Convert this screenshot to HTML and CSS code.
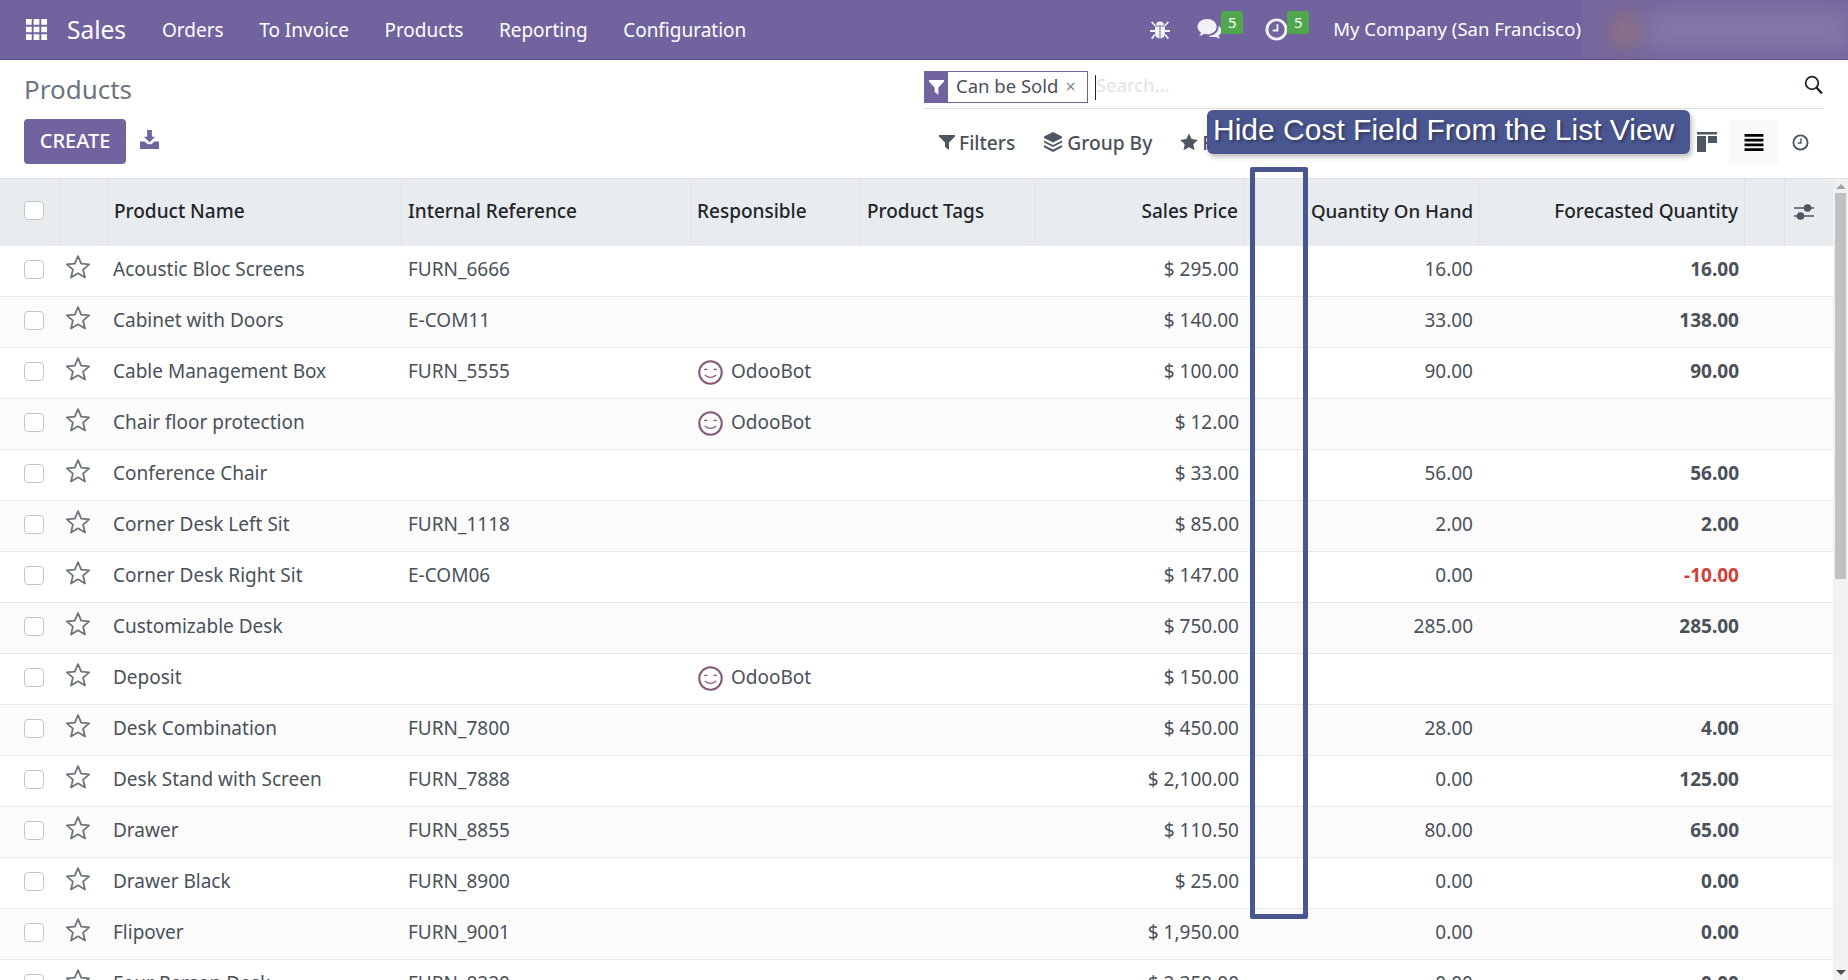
FILE: index.html
```html
<!DOCTYPE html>
<html lang="en">
<head>
<meta charset="utf-8">
<title>Products</title>
<link rel="stylesheet" href="styles.css">
</head>
<body>
<svg class="defs" aria-hidden="true">
  <symbol id="star" viewBox="0 0 24 24"><path d="M12 1.200l3.200 7.500 8 .7-6.100 5.200 1.900 7.900L12 18.300l-7 4.200 1.900-7.900L.8 9.400l8-.7z" fill="none" stroke="currentColor" stroke-width="1.800" stroke-linejoin="round"/></symbol>
  <symbol id="bot" viewBox="0 0 24 24"><circle cx="12" cy="12" r="10.800" fill="none" stroke="#875a7b" stroke-width="2"/><path d="M6 9.500q1.500-1.400 3 0M15 9.500q1.500-1.400 3 0M6.500 14.500q5.500 4.500 11 0" fill="none" stroke="#875a7b" stroke-width="1.200"/></symbol>
</svg>
<div class="app">
  <header class="navbar">
    <svg class="ico-grid" viewBox="0 0 22 22"><path fill="#fff" d="M0 0h6v6H0zM8 0h6v6H8zM16 0h6v6h-6zM0 8h6v6H0zM8 8h6v6H8zM16 8h6v6h-6zM0 16h6v6H0zM8 16h6v6H8zM16 16h6v6h-6z"/></svg>
    <span class="brand">Sales</span>
    <nav class="menu">
      <a>Orders</a><a>To Invoice</a><a>Products</a><a>Reporting</a><a>Configuration</a>
    </nav>
    <div class="systray">
      <svg class="ico-bug" viewBox="0 0 20 20"><path fill="#f3f1f7" d="M6 5.500a4 4 0 0 1 8 0zM5 6.500h4.500v12Q5 18 5 12.500zM10.500 6.500H15v6q0 5.500-4.500 6zM1 2.500L2.200 1.300 6 5.500l-1 1zM19 2.500l-1.200-1.200L14 5.500l1 1zM0 10h5v2H0zM15 10h5v2h-5zM1 18l3.500-4 1 1.200-3.200 4zM19 18l-3.500-4-1 1.200 3.200 4z"/></svg>
      <span class="tray-item tray-chat">
        <svg class="ico-chat" viewBox="0 0 26 24"><path fill="#f3f1f7" d="M10.500 1C5 1 .5 4.500.5 9c0 2.500 1.400 4.700 3.600 6.200-.3 1.200-1 2.300-2 3.300 2 0 3.800-.8 5.200-2 1 .3 2 .4 3.200.4 5.500 0 10-3.500 10-7.900S16 1 10.500 1z"/><path fill="#f3f1f7" d="M22.500 8c1.900 1.400 3 3.200 3 5.300 0 2.200-1.200 4-3.100 5.300.3 1 .9 1.900 1.700 2.900-1.800-.3-3.300-1-4.500-2-1 .2-2 .3-3 .3-2 0-3.800-.5-5.200-1.300 6 0 11.500-3.500 11.100-10.500z"/></svg>
        <b class="badge">5</b>
      </span>
      <span class="tray-item">
        <svg class="ico-clock-w" viewBox="0 0 24 24"><circle cx="12" cy="12" r="10" fill="none" stroke="#f3f1f7" stroke-width="3"/><path d="M13 6.500v6.500H8" fill="none" stroke="#f3f1f7" stroke-width="2"/></svg>
        <b class="badge">5</b>
      </span>
      <span class="company">My Company (San Francisco)</span>
    </div>
    <div class="user-blur" aria-hidden="true"><i class="blur-avatar"></i><i class="blur-name"></i></div>
  </header>

  <section class="control">
    <div class="control-left">
      <h1 class="title">Products</h1>
      <div class="actions">
        <button class="create">CREATE</button>
        <svg class="ico-download" viewBox="0 0 20 20"><path fill="#71639e" d="M7.500 0h5v7H16l-6 6-6-6h3.500zM0 12h5l3 3h4l3-3h5v8H0z"/></svg>
      </div>
    </div>
    <div class="control-right">
      <div class="search">
        <span class="facet-icon"><svg viewBox="0 0 16 16"><path fill="#fff" d="M0 0h16v1.500L10 8v8l-4-3.500V8L0 1.500z"/></svg></span>
        <span class="facet">Can be Sold<i class="facet-x">×</i></span>
        <span class="caret"></span>
        <span class="placeholder">Search...</span>
        <svg class="ico-search" viewBox="0 0 20 20"><circle cx="8" cy="8" r="6.300" fill="none" stroke="#212529" stroke-width="1.800"/><path d="M12.500 12.500L18 18.500" stroke="#212529" stroke-width="2.400"/></svg>
      </div>
      <div class="tools">
        <div class="filters">
          <span class="tool"><svg class="ico-filter" viewBox="0 0 16 16"><path fill="#4c5761" d="M0 1h16v1.500L10 8.500V16l-4-3V8.500L0 2.500z"/></svg>Filters</span>
          <span class="tool"><svg class="ico-layers" viewBox="0 0 20 20"><path fill="#4c5761" d="M10 0l9 4.500v1.500L10 10.500 1 6V4.500zM1 8.500l9 4.500 9-4.500v2L10 15l-9-4.500zM1 13l9 4.500 9-4.500v2.200L10 20l-9-4.800z"/></svg>Group By</span>
          <span class="tool"><svg class="ico-star-solid" viewBox="0 0 20 20"><path fill="#4c5761" d="M10 .5l3 6.300 6.800.9-5 4.700 1.300 6.900-6.100-3.400-6.100 3.400 1.300-6.900-5-4.700 6.800-.9z"/></svg>Favorites</span>
        </div>
        <div class="views">
          <svg class="ico-kanban" viewBox="0 0 20 20"><path fill="#4c5761" d="M0 0h20v2.500H0zM0 4h9v16H0zM11 4h9v7h-9z"/></svg>
          <span class="view-active"><svg class="ico-list" viewBox="0 0 20 18"><path d="M0 0h20v3H0zM0 5h20v3H0zM0 10h20v3H0zM0 15h20v3H0z"/></svg></span>
          <svg class="ico-clock" viewBox="0 0 18 18"><circle cx="9" cy="9" r="7.500" fill="none" stroke="#4c5761" stroke-width="2"/><path d="M9.500 4.500v5H6" fill="none" stroke="#4c5761" stroke-width="1.500"/></svg>
        </div>
      </div>
    </div>
  </section>

  <section class="content">
    <table class="list">
      <colgroup>
        <col class="c-check"><col class="c-fav"><col class="c-name"><col class="c-ref"><col class="c-resp"><col class="c-tags"><col class="c-price"><col class="c-cost"><col class="c-qty"><col class="c-fore"><col class="c-gap"><col class="c-opt">
      </colgroup>
      <thead>
        <tr>
          <th class="cb-cell"><i class="cb"></i></th><th></th><th>Product Name</th><th>Internal Reference</th><th>Responsible</th><th>Product Tags</th><th class="num">Sales Price</th><th></th><th class="num qty-head">Quantity On Hand</th><th class="num">Forecasted Quantity</th><th></th>
          <th class="opt"><svg class="ico-sliders" viewBox="0 0 20 18"><path stroke="#4c5761" stroke-width="1.600" d="M0 5h20M0 13h20"/><circle cx="13.500" cy="5" r="3.800" fill="#4c5761"/><circle cx="6.500" cy="13" r="3.800" fill="#4c5761"/></svg></th>
        </tr>
      </thead>
      <tbody>
        <tr><td class="cb-cell"><i class="cb"></i></td><td class="fav"><svg class="star"><use href="#star"/></svg></td><td class="name">Acoustic Bloc Screens</td><td>FURN_6666</td><td></td><td></td><td class="num">$ 295.00</td><td></td><td class="num">16.00</td><td class="num strong">16.00</td><td></td><td></td></tr>
        <tr><td class="cb-cell"><i class="cb"></i></td><td class="fav"><svg class="star"><use href="#star"/></svg></td><td class="name">Cabinet with Doors</td><td>E-COM11</td><td></td><td></td><td class="num">$ 140.00</td><td></td><td class="num">33.00</td><td class="num strong">138.00</td><td></td><td></td></tr>
        <tr><td class="cb-cell"><i class="cb"></i></td><td class="fav"><svg class="star"><use href="#star"/></svg></td><td class="name">Cable Management Box</td><td>FURN_5555</td><td class="resp"><span class="user"><svg class="bot"><use href="#bot"/></svg>OdooBot</span></td><td></td><td class="num">$ 100.00</td><td></td><td class="num">90.00</td><td class="num strong">90.00</td><td></td><td></td></tr>
        <tr><td class="cb-cell"><i class="cb"></i></td><td class="fav"><svg class="star"><use href="#star"/></svg></td><td class="name">Chair floor protection</td><td></td><td class="resp"><span class="user"><svg class="bot"><use href="#bot"/></svg>OdooBot</span></td><td></td><td class="num">$ 12.00</td><td></td><td class="num"></td><td class="num strong"></td><td></td><td></td></tr>
        <tr><td class="cb-cell"><i class="cb"></i></td><td class="fav"><svg class="star"><use href="#star"/></svg></td><td class="name">Conference Chair</td><td></td><td></td><td></td><td class="num">$ 33.00</td><td></td><td class="num">56.00</td><td class="num strong">56.00</td><td></td><td></td></tr>
        <tr><td class="cb-cell"><i class="cb"></i></td><td class="fav"><svg class="star"><use href="#star"/></svg></td><td class="name">Corner Desk Left Sit</td><td>FURN_1118</td><td></td><td></td><td class="num">$ 85.00</td><td></td><td class="num">2.00</td><td class="num strong">2.00</td><td></td><td></td></tr>
        <tr><td class="cb-cell"><i class="cb"></i></td><td class="fav"><svg class="star"><use href="#star"/></svg></td><td class="name">Corner Desk Right Sit</td><td>E-COM06</td><td></td><td></td><td class="num">$ 147.00</td><td></td><td class="num">0.00</td><td class="num strong neg">-10.00</td><td></td><td></td></tr>
        <tr><td class="cb-cell"><i class="cb"></i></td><td class="fav"><svg class="star"><use href="#star"/></svg></td><td class="name">Customizable Desk</td><td></td><td></td><td></td><td class="num">$ 750.00</td><td></td><td class="num">285.00</td><td class="num strong">285.00</td><td></td><td></td></tr>
        <tr><td class="cb-cell"><i class="cb"></i></td><td class="fav"><svg class="star"><use href="#star"/></svg></td><td class="name">Deposit</td><td></td><td class="resp"><span class="user"><svg class="bot"><use href="#bot"/></svg>OdooBot</span></td><td></td><td class="num">$ 150.00</td><td></td><td class="num"></td><td class="num strong"></td><td></td><td></td></tr>
        <tr><td class="cb-cell"><i class="cb"></i></td><td class="fav"><svg class="star"><use href="#star"/></svg></td><td class="name">Desk Combination</td><td>FURN_7800</td><td></td><td></td><td class="num">$ 450.00</td><td></td><td class="num">28.00</td><td class="num strong">4.00</td><td></td><td></td></tr>
        <tr><td class="cb-cell"><i class="cb"></i></td><td class="fav"><svg class="star"><use href="#star"/></svg></td><td class="name">Desk Stand with Screen</td><td>FURN_7888</td><td></td><td></td><td class="num">$ 2,100.00</td><td></td><td class="num">0.00</td><td class="num strong">125.00</td><td></td><td></td></tr>
        <tr><td class="cb-cell"><i class="cb"></i></td><td class="fav"><svg class="star"><use href="#star"/></svg></td><td class="name">Drawer</td><td>FURN_8855</td><td></td><td></td><td class="num">$ 110.50</td><td></td><td class="num">80.00</td><td class="num strong">65.00</td><td></td><td></td></tr>
        <tr><td class="cb-cell"><i class="cb"></i></td><td class="fav"><svg class="star"><use href="#star"/></svg></td><td class="name">Drawer Black</td><td>FURN_8900</td><td></td><td></td><td class="num">$ 25.00</td><td></td><td class="num">0.00</td><td class="num strong">0.00</td><td></td><td></td></tr>
        <tr><td class="cb-cell"><i class="cb"></i></td><td class="fav"><svg class="star"><use href="#star"/></svg></td><td class="name">Flipover</td><td>FURN_9001</td><td></td><td></td><td class="num">$ 1,950.00</td><td></td><td class="num">0.00</td><td class="num strong">0.00</td><td></td><td></td></tr>
        <tr><td class="cb-cell"><i class="cb"></i></td><td class="fav"><svg class="star"><use href="#star"/></svg></td><td class="name">Four Person Desk</td><td>FURN_8220</td><td></td><td></td><td class="num">$ 2,350.00</td><td></td><td class="num">0.00</td><td class="num strong">0.00</td><td></td><td></td></tr>
      </tbody>
    </table>
    <div class="scrollbar">
      <i class="arrow-up"></i>
      <i class="thumb"></i>
      <i class="arrow-down"></i>
    </div>
  </section>

  <div class="note-label">Hide Cost Field From the List View</div>
  <div class="note-box"></div>
</div>
</body>
</html>
```
FILE: styles.css
```css
* { box-sizing: border-box; }
html, body { margin: 0; height: 100%; overflow: hidden; background: #fff; }
body { font-family: "Noto Sans", sans-serif; font-size: 19px; color: #4a5159; }
.defs { position: absolute; width: 0; height: 0; }
.app { position: relative; height: 980px; display: flex; flex-direction: column; overflow: hidden; }

.navbar { flex: none; height: 60px; background: #71639e; border-bottom: 1px solid #5f5386; display: flex; align-items: center; color: #fff; padding-left: 26px; overflow: hidden; }
.ico-grid { width: 21px; height: 21px; flex: none; }
.brand { font-size: 24.500px; margin-left: 20px; width: 95px; }
.menu { display: flex; gap: 35.500px; font-size: 19px; }
.systray { margin-left: auto; display: flex; align-items: center; }
.ico-bug { width: 20px; height: 20px; margin-right: 27px; }
.tray-item { display: flex; align-items: flex-start; margin-right: 24px; }
.tray-chat { margin-right: 22px; }
.ico-chat { width: 25px; height: 23px; }
.ico-clock-w { width: 23px; height: 23px; }
.badge { background: #4fa64b; color: #fff; font-weight: 400; font-size: 15px; line-height: 23px; width: 22px; height: 23px; text-align: center; border-radius: 3px; margin-top: -7px; margin-left: -1px; }
.company { font-size: 18.500px; line-height: 24px; margin-top: -2px; }
.user-blur { position: relative; width: 266px; height: 60px; margin-left: 1px; flex: none; overflow: hidden; background: #75679c; }
.blur-avatar { position: absolute; left: 26px; top: 12px; width: 36px; height: 38px; background: #8a6f86; filter: blur(8px); border-radius: 50%; }
.blur-name { position: absolute; left: 66px; top: 10px; width: 200px; height: 40px; background: #8476a8; filter: blur(10px); }

.control { flex: none; height: 118px; display: flex; background: #fff; }
.control-left { width: 924px; padding: 0 0 14px 24px; display: flex; flex-direction: column; justify-content: space-between; }
.title { margin: 12px 0 0; font-size: 26px; font-weight: 400; color: #6b7681; line-height: 34px; }
.actions { display: flex; align-items: center; gap: 14px; }
.create { width: 102px; height: 45px; background: #71639e; color: #fff; border: 0; border-radius: 4px; font: 500 20px "Noto Sans", sans-serif; padding: 0 0 2px; }
.ico-download { width: 19px; height: 19px; margin-top: -4px; }
.control-right { width: 900px; display: flex; flex-direction: column; }
.search { margin-top: 11px; height: 38px; border-bottom: 1px solid #dee2e6; display: flex; align-items: flex-start; position: relative; }
.facet-icon { width: 24px; height: 32px; background: #71639e; display: flex; align-items: center; justify-content: center; }
.facet-icon svg { width: 15px; height: 15px; }
.facet { height: 32px; width: 140px; border: 1px solid #71639e; border-left: 0; padding-left: 8px; line-height: 27px; font-size: 18.500px; white-space: nowrap; }
.facet-x { font-style: normal; color: #7f8890; margin-left: 7px; font-size: 18px; }
.caret { width: 1px; height: 25px; background: #212529; margin: 4px 0 0 7px; }
.placeholder { color: #dfe3e8; font-size: 18.500px; line-height: 28px; }
.ico-search { position: absolute; right: 0; top: 4px; width: 20px; height: 20px; }
.tools { display: flex; justify-content: space-between; align-items: center; height: 46px; margin-top: 10px; }
.filters { display: flex; gap: 28px; padding-left: 15px; }
.tool { display: flex; align-items: center; gap: 4px; font-weight: 500; font-size: 19.200px; }
.ico-filter { width: 16px; height: 16px; }
.ico-layers { width: 20px; height: 20px; }
.ico-star-solid { width: 18px; height: 18px; }
.views { display: flex; align-items: center; }
.ico-kanban { width: 20px; height: 20px; margin-right: 12px; }
.view-active { width: 50px; height: 45px; background: #f8f9fa; display: flex; align-items: center; justify-content: center; }
.ico-list { width: 20px; height: 17px; }
.ico-clock { width: 17px; height: 17px; margin: 0 15px 0 13px; }

.content { flex: 1; display: flex; min-height: 0; overflow: hidden; border-top: 1px solid #dee2e6; }
.list { width: 1833px; flex: none; table-layout: fixed; border-collapse: separate; border-spacing: 0; align-self: flex-start; }
.c-check { width: 60px; }
.c-fav { width: 48px; }
.c-name { width: 294px; }
.c-ref { width: 289px; }
.c-resp { width: 170px; }
.c-tags { width: 174px; }
.c-price { width: 210px; }
.c-cost { width: 60px; }
.c-qty { width: 174px; }
.c-fore { width: 266px; }
.c-gap { width: 40px; }
.c-opt { width: 48px; }
th { height: 67px; background: #e9ecef; color: #212529; font-weight: 500; text-align: left; padding: 0 6px 4px; border-right: 1px solid #dfe2e6; font-size: 19px; white-space: nowrap; }
th:last-child { border-right: 0; }
th.qty-head { padding: 0 5px 4px 0; font-size: 18.700px; }
td { height: 51px; padding: 0 6px 5px; border-bottom: 1px solid #e6e8eb; white-space: nowrap; overflow: hidden; font-size: 19px; }
td.name { padding-left: 5px; }
tbody tr:nth-child(even) td { background: #fbfbfb; }
.num { text-align: right; }
.strong { font-weight: 700; }
.neg { color: #d23f3a; }
td.resp { padding: 1px 6px 0 7px; }
.cb-cell { padding-left: 24px; }
td.cb-cell { padding-bottom: 4px; }
.cb { display: block; width: 20px; height: 19px; border: 1px solid #c3c6c9; border-radius: 4px; background: #fff; }
.fav { padding: 0 0 3px 6px; }
.star { display: block; width: 24px; height: 24px; color: #6c757d; margin-top: -5px; }
.user { display: inline-flex; align-items: center; gap: 8px; }
.bot { width: 25px; height: 25px; margin-top: 4px; }
th.opt { padding: 0 11px 2px 0; }
.ico-sliders { display: block; width: 20px; height: 18px; margin: 0 auto; }

.scrollbar { flex: 1; background: #f1f1f1; display: flex; flex-direction: column; align-items: center; position: relative; }
.arrow-up { margin-top: 5px; border: 5px solid transparent; border-top: 0; border-bottom: 5px solid #a3a3a3; }
.thumb { width: 11px; height: 386px; background: #c1c1c1; margin-top: 4px; }
.arrow-down { margin-top: auto; margin-bottom: 5px; border: 5px solid transparent; border-bottom: 0; border-top: 5px solid #505050; }

.note-label { position: absolute; left: 1207px; top: 110px; width: 483px; height: 44px; background: #4a5690; border-radius: 6px; color: #fff; font: 30px/40px "Liberation Sans", sans-serif; padding-left: 6px; text-shadow: 2px 2px 3px rgba(0,0,0,.35); box-shadow: 2px 3px 5px rgba(0,0,0,.25); white-space: nowrap; }
.note-box { position: absolute; left: 1250px; top: 167px; width: 58px; height: 752px; border: 5px solid #4a5690; border-radius: 2px; }
```
